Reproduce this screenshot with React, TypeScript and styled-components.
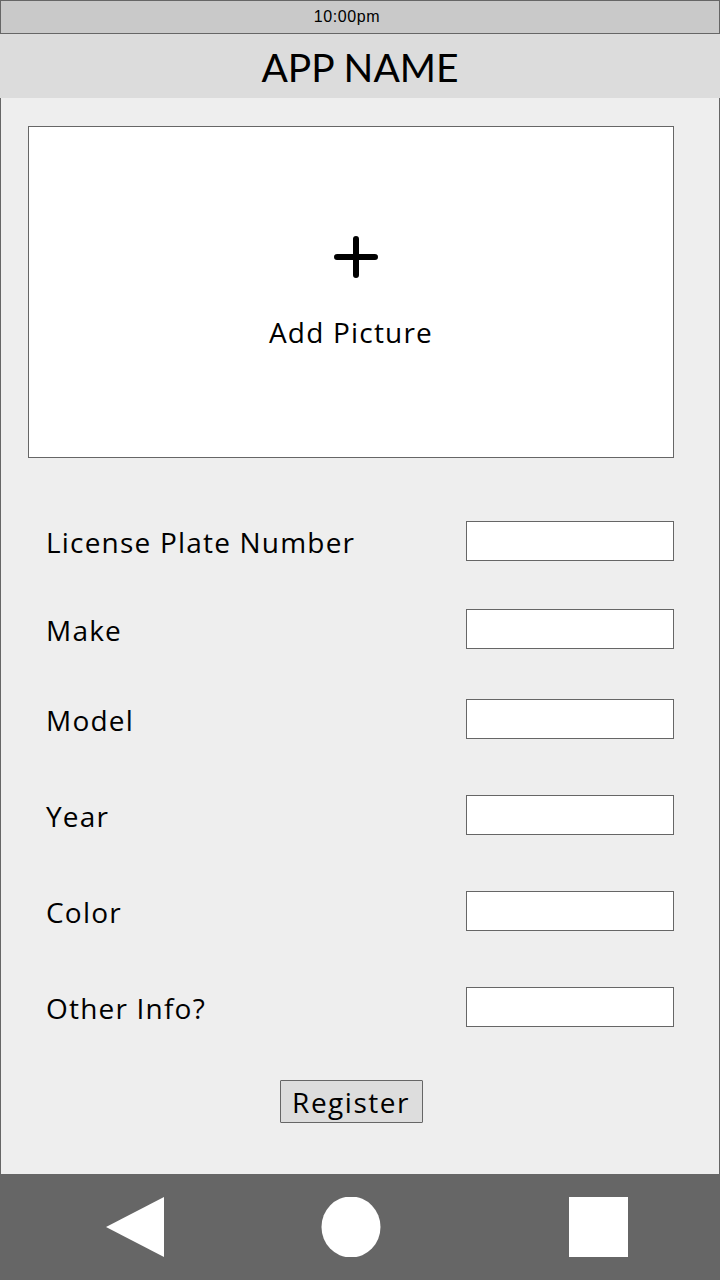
import React from "react";
import styled, { createGlobalStyle } from "styled-components";

const Global = createGlobalStyle`
  html, body { margin: 0; padding: 0; }
  body { width: 720px; height: 1280px; overflow: hidden; background: #eeeeee; }
  * { box-sizing: border-box; }
`;

const Screen = styled.div`
  width: 720px;
  height: 1280px;
  display: flex;
  flex-direction: column;
  font-family: "Open Sans", Lato, sans-serif;
  color: #000;
`;

const StatusBar = styled.div`
  height: 34px;
  background: #c9c9c9;
  border: 1px solid #666;
  display: flex;
  align-items: center;
  justify-content: center;
  padding-right: 26px;
  font-family: "Liberation Sans", Arial, sans-serif;
  font-size: 16px;
  letter-spacing: 0.6px;
`;

const Header = styled.div`
  height: 64px;
  background: #dcdcdc;
  display: flex;
  align-items: center;
  justify-content: center;
  font-family: Lato, sans-serif;
  font-size: 39px;
  padding-top: 2px;
`;

const Content = styled.main`
  flex: 1;
  background: #eeeeee;
  border-left: 1px solid #666;
  border-right: 1px solid #666;
  padding: 28px 45px 0 27px;
  display: flex;
  flex-direction: column;
`;

const PictureBox = styled.div`
  width: 646px;
  height: 332px;
  background: #fff;
  border: 1px solid #666;
  display: flex;
  flex-direction: column;
  align-items: center;
  padding-top: 108px;
`;

const PlusIcon = styled.svg`
  width: 44px;
  height: 44px;
  margin-left: 9px;
`;

const PictureLabel = styled.div`
  font-size: 28px;
  letter-spacing: 1.2px;
  margin-top: 34px;
`;

const Row = styled.div<{ $gap: number }>`
  height: 40px;
  margin-top: ${(p) => p.$gap}px;
  display: flex;
  align-items: center;
  justify-content: space-between;
  padding-left: 18px;
`;

const Label = styled.span`
  font-size: 28px;
  letter-spacing: 1.2px;
  padding-top: 2px;
`;

const Input = styled.input`
  width: 208px;
  height: 40px;
  border: 1px solid #666;
  background: #fff;
  margin: 0;
  padding: 0;
`;

const ButtonRow = styled.div`
  display: flex;
  justify-content: center;
  margin-top: 53px;
`;

const Button = styled.button`
  width: 143px;
  height: 43px;
  background: #dddddd;
  border: 1px solid #666;
  border-radius: 1px;
  font-family: "Open Sans", Lato, sans-serif;
  font-size: 28px;
  letter-spacing: 1.5px;
  line-height: 1;
  color: #000;
  padding: 0;
`;

const NavBar = styled.nav`
  height: 106px;
  background: #666666;
  display: flex;
  align-items: center;
  padding-left: 106px;
`;

const NavIcon = styled.svg<{ $left: number }>`
  width: ${(p) => (p.$left === 0 ? 58 : 60)}px;
  height: 60px;
  display: block;
  margin-left: ${(p) => p.$left}px;
`;

const rows: { label: string; gap: number }[] = [
  { label: "License Plate Number", gap: 63 },
  { label: "Make", gap: 48 },
  { label: "Model", gap: 50 },
  { label: "Year", gap: 56 },
  { label: "Color", gap: 56 },
  { label: "Other Info?", gap: 56 },
];

export default function App() {
  return (
    <>
      <Global />
      <Screen>
        <StatusBar>10:00pm</StatusBar>
        <Header>APP NAME</Header>
        <Content>
          <PictureBox>
            <PlusIcon viewBox="0 0 44 44">
              <path d="M22 4 V40 M3 22 H41" stroke="#000" strokeWidth="6" strokeLinecap="round" fill="none" />
            </PlusIcon>
            <PictureLabel>Add Picture</PictureLabel>
          </PictureBox>
          {rows.map((r) => (
            <Row key={r.label} $gap={r.gap}>
              <Label>{r.label}</Label>
              <Input />
            </Row>
          ))}
          <ButtonRow>
            <Button>Register</Button>
          </ButtonRow>
        </Content>
        <NavBar>
          <NavIcon $left={0} viewBox="0 0 58 60">
            <polygon points="0,30 58,0 58,60" fill="#fff" />
          </NavIcon>
          <NavIcon $left={157} viewBox="0 0 60 60">
            <ellipse cx="30" cy="30" rx="29.5" ry="30.5" fill="#fff" />
          </NavIcon>
          <NavIcon $left={188} viewBox="0 0 60 60">
            <rect x="0" y="0" width="59" height="60" fill="#fff" />
          </NavIcon>
        </NavBar>
      </Screen>
    </>
  );
}
